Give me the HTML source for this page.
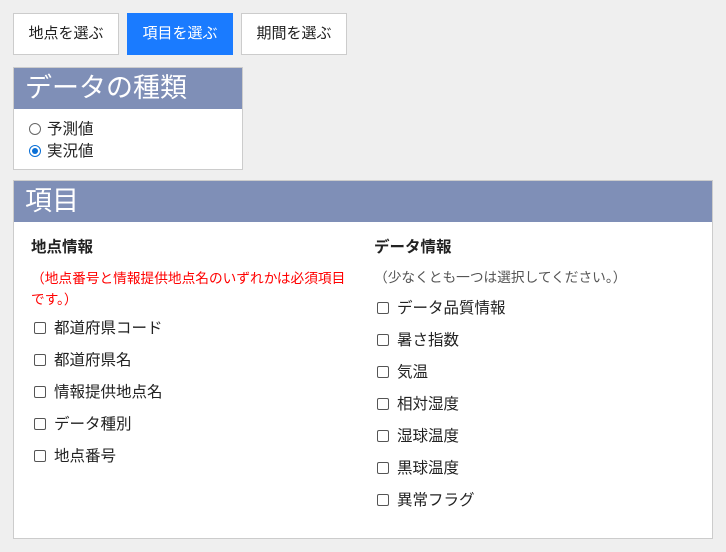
<!DOCTYPE html>
<html><head><meta charset="utf-8"><style>
body{margin:0;width:726px;height:552px;background:#efefef;font-family:"Liberation Sans","Noto Sans CJK JP",sans-serif;color:#222;position:relative;overflow:hidden}
.btn{position:absolute;top:13px;height:40px;width:104px;border:1px solid #ccc;background:#fff;font-size:15px;line-height:40px;text-align:center;color:#222}
.btn.on{background:#1a7bff;border-color:#1a7bff;color:#fff}
.panel{position:absolute;background:#fff;border:1px solid #ccc;box-sizing:border-box}
.hd{background:#7f8fb7;color:#fff;font-size:27px;height:41px;line-height:40px;padding-left:11px}
.cb{position:absolute;font-size:15.5px;line-height:20px;white-space:nowrap}
.cb i{display:inline-block;width:12px;height:12px;border:1px solid #555;border-radius:2px;margin-right:8px;vertical-align:-1px;box-sizing:border-box}
.r{display:inline-block;width:12px;height:12px;border:1px solid #666;border-radius:50%;box-sizing:border-box;margin-right:6px;vertical-align:-1px;position:relative}
.r.on{border-color:#0a6fd6;border-width:1.5px}
.r.on:after{content:"";position:absolute;left:1.5px;top:1.5px;width:6px;height:6px;border-radius:50%;background:#0a6fd6}
</style></head><body>
<div class="btn" style="left:13px">地点を選ぶ</div>
<div class="btn on" style="left:127px">項目を選ぶ</div>
<div class="btn" style="left:241px">期間を選ぶ</div>
<div class="panel" style="left:13px;top:67px;width:230px;height:103px"><div class="hd">データの種類</div>
<div class="cb" style="left:15px;top:52px"><span class="r"></span>予測値</div>
<div class="cb" style="left:15px;top:74px"><span class="r on"></span>実況値</div></div>
<div class="panel" style="left:13px;top:180px;width:700px;height:359px"><div class="hd">項目</div>
<div class="cb" style="left:17px;top:57px;font-weight:bold">地点情報</div>
<div class="cb" style="left:17px;top:87px;font-size:13.7px;color:#f00;white-space:normal;width:320px;line-height:21px">（地点番号と情報提供地点名のいずれかは必須項目<br>です。）</div>
<div class="cb" style="left:20px;top:138px"><i></i>都道府県コード</div>
<div class="cb" style="left:20px;top:170px"><i></i>都道府県名</div>
<div class="cb" style="left:20px;top:202px"><i></i>情報提供地点名</div>
<div class="cb" style="left:20px;top:234px"><i></i>データ種別</div>
<div class="cb" style="left:20px;top:266px"><i></i>地点番号</div>
<div class="cb" style="left:360px;top:57px;font-weight:bold">データ情報</div>
<div class="cb" style="left:360px;top:87px;font-size:13.7px;color:#555">（少なくとも一つは選択してください。）</div>
<div class="cb" style="left:363px;top:118px"><i></i>データ品質情報</div>
<div class="cb" style="left:363px;top:150px"><i></i>暑さ指数</div>
<div class="cb" style="left:363px;top:182px"><i></i>気温</div>
<div class="cb" style="left:363px;top:214px"><i></i>相対湿度</div>
<div class="cb" style="left:363px;top:246px"><i></i>湿球温度</div>
<div class="cb" style="left:363px;top:278px"><i></i>黒球温度</div>
<div class="cb" style="left:363px;top:310px"><i></i>異常フラグ</div>
</div>
</body></html>
